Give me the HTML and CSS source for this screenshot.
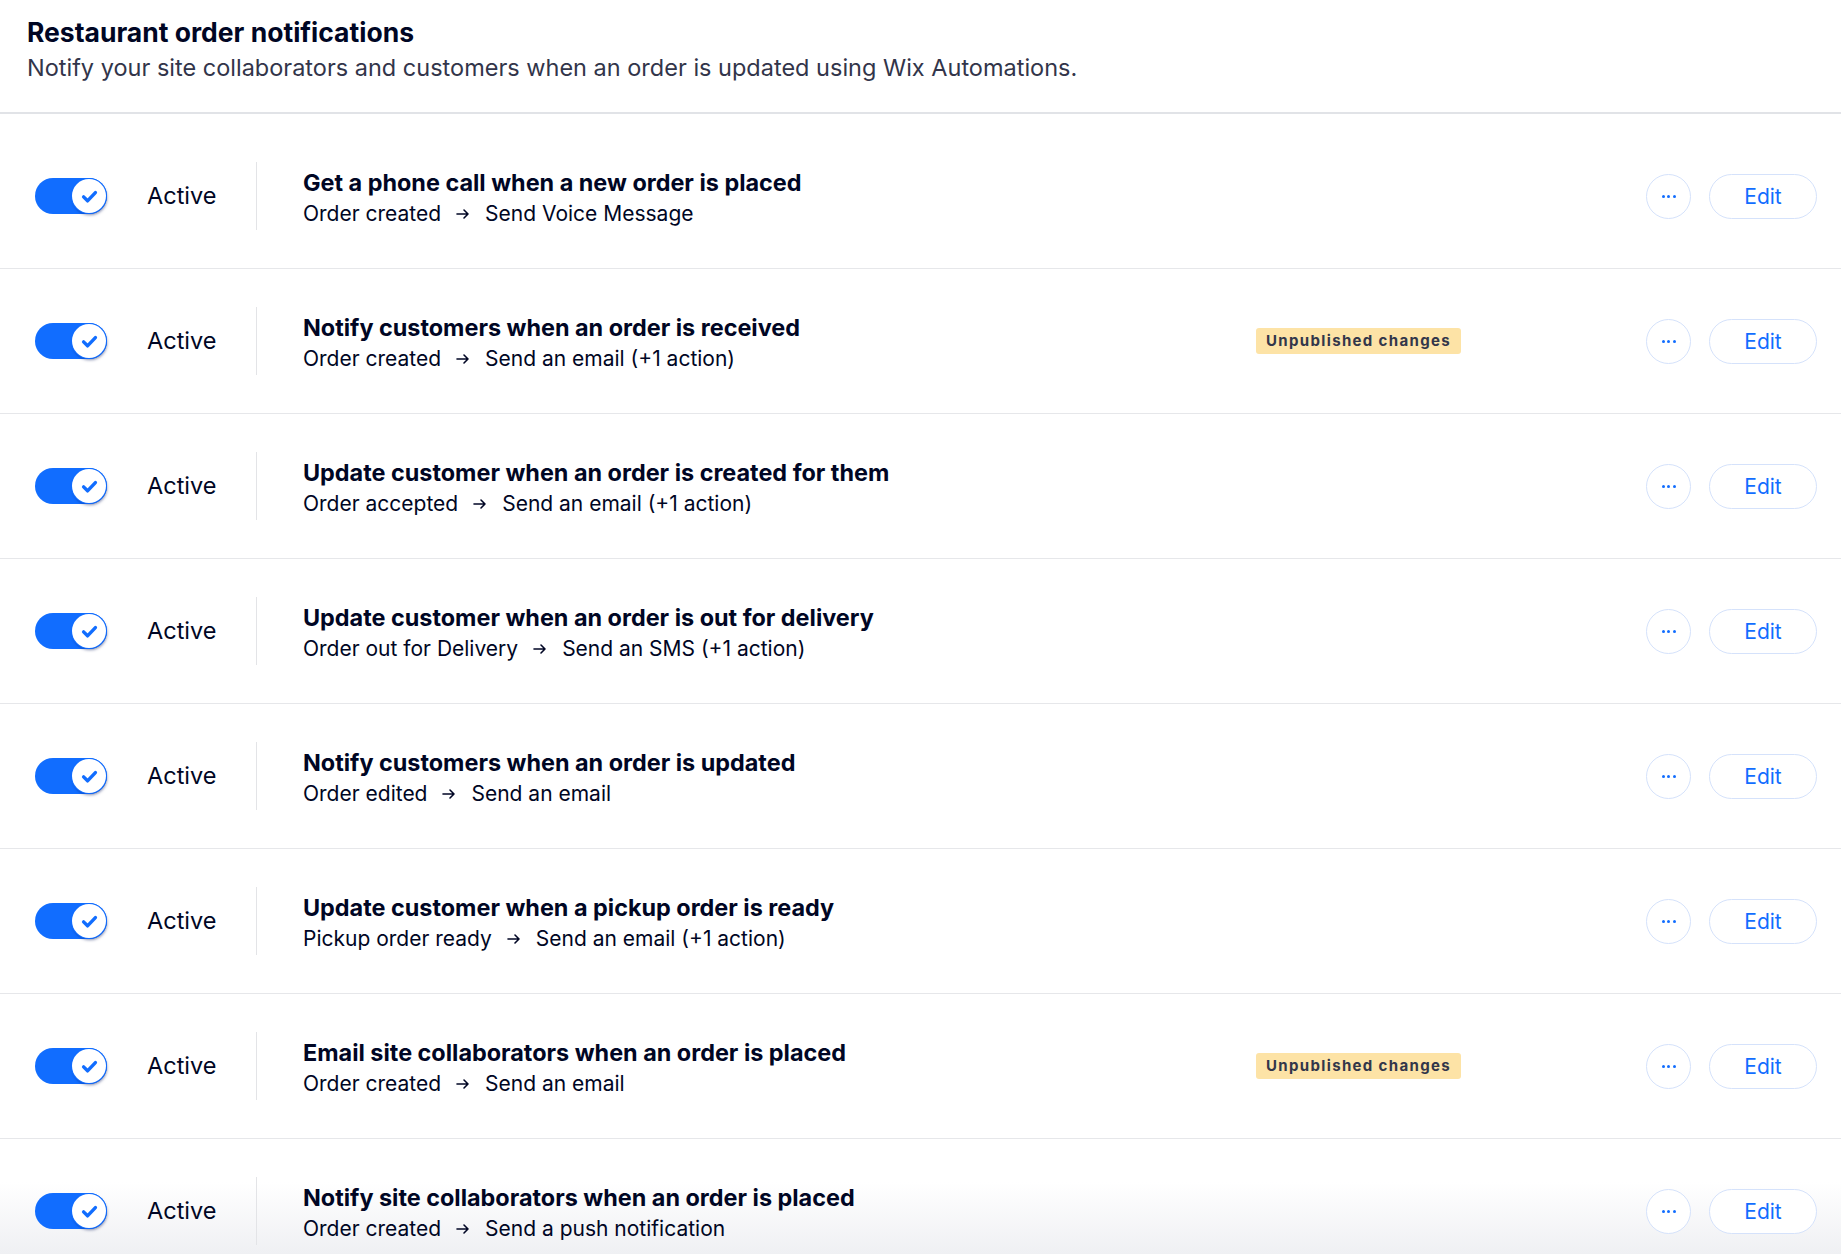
FILE: index.html
```html
<!DOCTYPE html>
<html lang="en">
<head>
<meta charset="utf-8">
<title>Restaurant order notifications</title>
<link rel="stylesheet" href="styles.css">
</head>
<body>
<header class="page-header">
  <h1 class="page-title">Restaurant order notifications</h1>
  <p class="page-subtitle">Notify your site collaborators and customers when an order is updated using Wix Automations.</p>
</header>

<ul class="list">
  <li class="row">
    <span class="toggle"><span class="thumb"><svg viewBox="0 0 16 16" class="check"><path d="M3.5 8.3l3 3 6-6.3"/></svg></span></span>
    <span class="status">Active</span>
    <div class="info">
      <div class="name">Get a phone call when a new order is placed</div>
      <div class="flow">Order created<svg class="arrow" viewBox="0 0 16 16"><path d="M2 8h11M9 4l4 4-4 4"/></svg>Send Voice Message</div>
    </div>
    <div class="badge-slot"></div>
    <div class="actions"><button class="more"><span></span><span></span><span></span></button><button class="edit">Edit</button></div>
  </li>
  <li class="row">
    <span class="toggle"><span class="thumb"><svg viewBox="0 0 16 16" class="check"><path d="M3.5 8.3l3 3 6-6.3"/></svg></span></span>
    <span class="status">Active</span>
    <div class="info">
      <div class="name">Notify customers when an order is received</div>
      <div class="flow">Order created<svg class="arrow" viewBox="0 0 16 16"><path d="M2 8h11M9 4l4 4-4 4"/></svg>Send an email (+1 action)</div>
    </div>
    <div class="badge-slot"><span class="badge">Unpublished changes</span></div>
    <div class="actions"><button class="more"><span></span><span></span><span></span></button><button class="edit">Edit</button></div>
  </li>
  <li class="row">
    <span class="toggle"><span class="thumb"><svg viewBox="0 0 16 16" class="check"><path d="M3.5 8.3l3 3 6-6.3"/></svg></span></span>
    <span class="status">Active</span>
    <div class="info">
      <div class="name">Update customer when an order is created for them</div>
      <div class="flow">Order accepted<svg class="arrow" viewBox="0 0 16 16"><path d="M2 8h11M9 4l4 4-4 4"/></svg>Send an email (+1 action)</div>
    </div>
    <div class="badge-slot"></div>
    <div class="actions"><button class="more"><span></span><span></span><span></span></button><button class="edit">Edit</button></div>
  </li>
  <li class="row">
    <span class="toggle"><span class="thumb"><svg viewBox="0 0 16 16" class="check"><path d="M3.5 8.3l3 3 6-6.3"/></svg></span></span>
    <span class="status">Active</span>
    <div class="info">
      <div class="name">Update customer when an order is out for delivery</div>
      <div class="flow">Order out for Delivery<svg class="arrow" viewBox="0 0 16 16"><path d="M2 8h11M9 4l4 4-4 4"/></svg>Send an SMS (+1 action)</div>
    </div>
    <div class="badge-slot"></div>
    <div class="actions"><button class="more"><span></span><span></span><span></span></button><button class="edit">Edit</button></div>
  </li>
  <li class="row">
    <span class="toggle"><span class="thumb"><svg viewBox="0 0 16 16" class="check"><path d="M3.5 8.3l3 3 6-6.3"/></svg></span></span>
    <span class="status">Active</span>
    <div class="info">
      <div class="name">Notify customers when an order is updated</div>
      <div class="flow">Order edited<svg class="arrow" viewBox="0 0 16 16"><path d="M2 8h11M9 4l4 4-4 4"/></svg>Send an email</div>
    </div>
    <div class="badge-slot"></div>
    <div class="actions"><button class="more"><span></span><span></span><span></span></button><button class="edit">Edit</button></div>
  </li>
  <li class="row">
    <span class="toggle"><span class="thumb"><svg viewBox="0 0 16 16" class="check"><path d="M3.5 8.3l3 3 6-6.3"/></svg></span></span>
    <span class="status">Active</span>
    <div class="info">
      <div class="name">Update customer when a pickup order is ready</div>
      <div class="flow">Pickup order ready<svg class="arrow" viewBox="0 0 16 16"><path d="M2 8h11M9 4l4 4-4 4"/></svg>Send an email (+1 action)</div>
    </div>
    <div class="badge-slot"></div>
    <div class="actions"><button class="more"><span></span><span></span><span></span></button><button class="edit">Edit</button></div>
  </li>
  <li class="row">
    <span class="toggle"><span class="thumb"><svg viewBox="0 0 16 16" class="check"><path d="M3.5 8.3l3 3 6-6.3"/></svg></span></span>
    <span class="status">Active</span>
    <div class="info">
      <div class="name">Email site collaborators when an order is placed</div>
      <div class="flow">Order created<svg class="arrow" viewBox="0 0 16 16"><path d="M2 8h11M9 4l4 4-4 4"/></svg>Send an email</div>
    </div>
    <div class="badge-slot"><span class="badge">Unpublished changes</span></div>
    <div class="actions"><button class="more"><span></span><span></span><span></span></button><button class="edit">Edit</button></div>
  </li>
  <li class="row">
    <span class="toggle"><span class="thumb"><svg viewBox="0 0 16 16" class="check"><path d="M3.5 8.3l3 3 6-6.3"/></svg></span></span>
    <span class="status">Active</span>
    <div class="info">
      <div class="name">Notify site collaborators when an order is placed</div>
      <div class="flow">Order created<svg class="arrow" viewBox="0 0 16 16"><path d="M2 8h11M9 4l4 4-4 4"/></svg>Send a push notification</div>
    </div>
    <div class="badge-slot"></div>
    <div class="actions"><button class="more"><span></span><span></span><span></span></button><button class="edit">Edit</button></div>
  </li>
</ul>
</body>
</html>
```

FILE: styles.css
```css
* { box-sizing: border-box; }
html, body { margin: 0; padding: 0; }
body {
  background: linear-gradient(to bottom, #ffffff calc(100% - 72px), #eff0f3 100%);
  font-family: "Inter", "Liberation Sans", sans-serif;
  color: #000624;
  overflow: hidden;
  height: 1254px;
}
.page-header {
  padding: 17px 27px 29px;
  border-bottom: 2px solid #e1e3e7;
  background: #fff;
}
.page-title {
  margin: 0;
  font-size: 26.5px;
  line-height: 30px;
  font-weight: 700;
  color: #000624;
}
.page-subtitle {
  margin: 6px 0 0;
  font-size: 23.5px;
  line-height: 30px;
  color: #32354a;
}
.list {
  list-style: none;
  margin: 0;
  padding: 10px 0 0;
}
.row {
  display: flex;
  align-items: center;
  height: 145px;
  padding: 0 24px 0 35px;
  border-bottom: 1px solid #e6e7ea;
}
.toggle {
  position: relative;
  flex: none;
  width: 72px;
  height: 36px;
  border-radius: 18px;
  background: #116dff;
}
.thumb {
  position: absolute;
  right: 1px;
  top: 1px;
  width: 34px;
  height: 34px;
  border-radius: 50%;
  background: #fff;
  box-shadow: 0 0 0 1px #116dff, 1px 2px 3px rgba(0, 20, 90, 0.5);
  display: flex;
  align-items: center;
  justify-content: center;
}
.check {
  width: 21px;
  height: 21px;
  fill: none;
  stroke: #116dff;
  stroke-width: 2.6;
  stroke-linecap: round;
  stroke-linejoin: round;
}
.status {
  flex: none;
  width: 109px;
  margin-left: 40px;
  font-size: 23.5px;
  line-height: 30px;
  color: #000624;
}
.info {
  flex: 1;
  min-width: 0;
  border-left: 1px solid #e3e4e7;
  padding-left: 46px;
  padding-top: 5px;
  padding-bottom: 1px;
}
.name {
  font-size: 23.4px;
  line-height: 31px;
  font-weight: 700;
}
.flow {
  display: flex;
  align-items: center;
  font-size: 21px;
  line-height: 31px;
}
.arrow {
  width: 16px;
  height: 16px;
  margin: 0 14px;
  fill: none;
  stroke: #000624;
  stroke-width: 1.6;
  stroke-linecap: round;
  stroke-linejoin: round;
}
.badge-slot {
  flex: none;
  width: 390px;
  display: flex;
}
.badge {
  display: inline-block;
  height: 26px;
  padding: 0 10px;
  border-radius: 3px;
  background: #fde3a6;
  color: #32364a;
  font-size: 15px;
  line-height: 26px;
  font-weight: 700;
  letter-spacing: 1.35px;
}
.actions {
  flex: none;
  display: flex;
  align-items: center;
  gap: 18px;
}
.more {
  width: 45px;
  height: 45px;
  border-radius: 50%;
  border: 1px solid #d5e2fb;
  background: #fff;
  display: flex;
  align-items: center;
  justify-content: center;
  gap: 2.5px;
  padding: 0;
}
.more span {
  width: 3px;
  height: 3px;
  border-radius: 50%;
  background: #116dff;
}
.edit {
  width: 108px;
  height: 45px;
  border-radius: 23px;
  border: 1px solid #d5e2fb;
  background: #fff;
  color: #116dff;
  font-family: "Inter", "Liberation Sans", sans-serif;
  font-size: 21px;
  padding: 0;
}
```
